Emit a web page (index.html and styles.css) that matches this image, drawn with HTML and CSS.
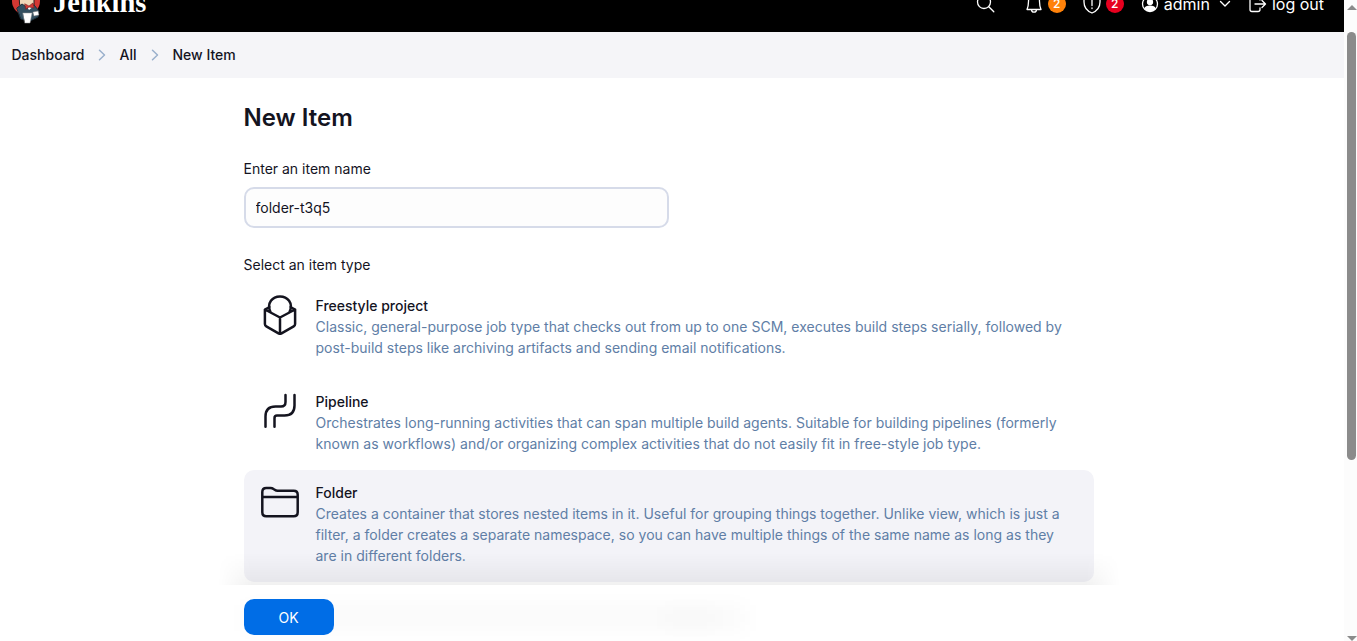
FILE: index.html
```html
<!DOCTYPE html>
<html lang="en">
<head>
<meta charset="utf-8">
<title>New Item - Jenkins</title>
<link rel="stylesheet" href="styles.css">
</head>
<body>
<div class="window">
<div class="page">
  <header class="header">
    <div class="brand">
      <svg class="mascot" viewBox="0 0 32 40">
        <circle cx="15" cy="17" r="14" fill="#d33833"/>
        <path d="M8 7h15v14l-7 4-7-4z" fill="#f0d6b7" stroke="#231f20"/>
        <path d="M6 24l5-4 6 4 6-3 5 6-1 6-8 4-9-2z" fill="#335061" stroke="#1d2f3a"/>
        <path d="M15 21l3 5 5-4" fill="#fff"/>
        <path d="M14 20l4 2 4-3 1 5-5-1-3 2z" fill="#d33833" stroke="#81211f" stroke-width=".7"/>
        <path d="M12 29h9l-2 10h-5z" fill="#fff" stroke="#999" stroke-width=".5"/>
        <path d="M22 28l5-1 1 4-5 1z" fill="#fff" stroke="#777" stroke-width=".5"/>
      </svg>
      <span class="brand-name">Jenkins</span>
    </div>
    <nav class="tools">
      <svg class="icon search" viewBox="0 0 20 20"><circle cx="8" cy="8" r="6.5"/><path d="M12.8 12.8l5 5"/></svg>
      <span class="tool alerts"><svg class="icon" viewBox="0 0 20 20"><path d="M10 1C6 1 4.500 4 4.500 7.500 4.500 11 4 13 3 15.500h14C16 13 15.500 11 15.500 7.500 15.500 4 14 1 10 1zM7.500 15.500c0 3.600 5 3.600 5 0"/></svg><b class="badge orange">2</b></span>
      <span class="tool security"><svg class="icon" viewBox="0 0 20 20"><path d="M10 1L2 4v4c0 6 3 9 8 11C15 17 18 14 18 8V4zM10 5v6.500M10 14v.5"/></svg><b class="badge red">2</b></span>
      <span class="tool user"><svg class="icon" viewBox="0 0 20 20"><circle cx="10" cy="10" r="7.500"/><circle cx="10" cy="8" r="2.500" fill="#fff"/><path d="M5 14.500c1-3 9-3 10 0-2 3-8 3-10 0z" fill="#fff"/></svg><span>admin</span><svg class="chevron" viewBox="0 0 12 12"><path d="M1.500 3.500L6 8l4.500-4.500"/></svg></span>
      <span class="tool logout"><svg class="icon" viewBox="0 0 20 20"><path d="M12 6V4.500Q12 2.500 10 2.500H4Q2 2.500 2 4.500v11q0 2 2 2h6q2 0 2-2V14M7 10h10.500M14 6.500l3.500 3.500-3.500 3.500"/></svg><span>log out</span></span>
    </nav>
  </header>
  <div class="breadcrumbs">
    <span>Dashboard</span>
    <svg class="sep" viewBox="0 0 8 12"><path d="M1.500 1.200L6.500 6l-5 4.800"/></svg>
    <span>All</span>
    <svg class="sep wide" viewBox="0 0 8 12"><path d="M1.500 1.200L6.500 6l-5 4.800"/></svg>
    <span>New Item</span>
  </div>
  <main class="main">
    <h1 class="title">New Item</h1>
    <label class="label" for="name">Enter an item name</label>
    <input class="name" id="name" type="text" value="folder-t3q5">
    <div class="label">Select an item type</div>
    <ul class="types">
      <li class="type">
        <svg class="type-icon" viewBox="0 0 40 40"><path d="M20 22.500L4.900 14.500v14.500q0 1.600 1.400 2.400l12.200 7q1.500.9 3 0l12.200-7q1.400-.8 1.400-2.400V14.500zV38.500M9.600 12L4.900 14.500M30.400 12l4.700 2.500M10.300 16.500C6.500 8 12.500 1.500 20 1.500S33.500 8 29.700 16.500"/></svg>
        <div class="body"><div class="type-name">Freestyle project</div><div class="desc">Classic, general-purpose job type that checks out from up to one SCM, executes build steps serially, followed by post-build steps like archiving artifacts and sending email notifications.</div></div>
      </li>
      <li class="type">
        <svg class="type-icon" viewBox="0 0 40 40"><path d="M5.500 35.700V25.500q0-10 10-10H21q4.500 0 4.500-4.500V4M14.500 35.700V27q0-2.500 2.500-2.500h7.500q10 0 10-10V4"/></svg>
        <div class="body"><div class="type-name">Pipeline</div><div class="desc">Orchestrates long-running activities that can span multiple build agents. Suitable for building pipelines (formerly known as workflows) and/or organizing complex activities that do not easily fit in free-style job type.</div></div>
      </li>
      <li class="type active">
        <svg class="type-icon" viewBox="0 0 40 40"><path d="M2.300 10Q2.300 6 6.300 6h4.200q1.700 0 3 1l1.200.8q1.300 1 3 1h16q4 0 4 4v17.400q0 4-4 4H6.300q-4 0-4-4zM2.300 15h35.400"/></svg>
        <div class="body"><div class="type-name">Folder</div><div class="desc">Creates a container that stores nested items in it. Useful for grouping things together. Unlike view, which is just a filter, a folder creates a separate namespace, so you can have multiple things of the same name as long as they are in different folders.</div></div>
      </li>
    </ul>
  </main>
  <footer class="footer">
    <div class="shade"></div>
    <div class="blur"></div>
    <div class="blur dense"></div>
    <button class="ok">OK</button>
  </footer>
</div>
<div class="scrollbar"><i class="up"></i><i class="thumb"></i><i class="down"></i></div>
</div>
</body>
</html>
```
FILE: styles.css
```css
* { box-sizing: border-box; }
body { margin: 0; overflow: hidden; font: 14px/21px Inter, sans-serif; color: #14141f; background: #fff; }
svg { flex: none; fill: none; stroke-linecap: round; stroke-linejoin: round; }
.window { display: flex; height: 641px; overflow: hidden; }
.page { display: flex; flex-direction: column; width: 1344px; height: 641px; }
.header { display: flex; flex: none; justify-content: space-between; height: 56px; margin-top: -24px; padding: 0 20px 0 11px; background: #000; color: #fff; }
.brand { display: flex; align-items: center; gap: 10px; }
.mascot { width: 32px; height: 40px; }
.brand-name { margin-bottom: 3px; font: bold 28.5px/32px "Liberation Serif", serif; }
.tools { display: flex; align-items: center; font-size: 16px; }
.tool { display: flex; align-items: center; }
.icon { width: 20px; height: 20px; stroke: #fff; stroke-width: 1.3; }
.search { margin-right: 28px; }
.alerts { margin-right: 16px; }
.security { margin-right: 16px; }
.user { margin-right: 17px; }
.user .icon, .logout .icon { margin-right: 4px; }
.chevron { width: 12px; height: 12px; margin-left: 9px; stroke: #fff; stroke-width: 1.4; }
.badge { width: 18px; height: 18px; margin-left: 4px; border-radius: 50%; font-size: 12px; line-height: 18px; font-weight: 500; text-align: center; }
.orange { background: #ff820a; }
.red { background: #e6001f; }
.breadcrumbs { display: flex; flex: none; align-items: center; height: 46px; padding: 0 0 1px 11.5px; background: #f5f5f8; font-weight: 500; }
.sep { width: 8px; height: 12px; margin: 0 13.5px; stroke: #9ab0cc; stroke-width: 1.5; }
.sep.wide { margin-left: 14.5px; }
.main { width: 850px; height: 507px; margin-left: 244px; }
.title { margin: 0 0 0 -.5px; padding-top: 24px; font-size: 24px; line-height: 32px; font-weight: 600; }
.label { display: block; margin: 24px 0 0 -.5px; }
.name { display: block; width: 425px; height: 41px; margin: 8px 0 26px; padding: 0 9.5px; border: 2px solid #d6dbe9; border-radius: 10px; background: #fdfdfd; color: #14141f; font: 14px Inter, sans-serif; outline: none; }
.types { margin: 9px 0 0; padding: 0; list-style: none; }
.type { display: flex; gap: 15.5px; height: 96px; padding: 11px 16px; border-radius: 10px; }
.type.active { height: 112px; margin-top: -6px; padding-top: 12px; background: #f3f3f8; }
.type-icon { width: 40px; height: 40px; stroke: #14141f; stroke-width: 2.5; }
.body { width: 762px; }
.type-name { font-weight: 500; }
.desc { color: #607ea6; letter-spacing: .01px; }
.footer { position: relative; display: flex; align-items: center; height: 56px; padding: 8px 0 0 244px; background: #fff; }
.shade { position: absolute; left: 218px; bottom: 56px; width: 902px; height: 32px; background: linear-gradient(transparent, rgba(0,0,0,.055)); -webkit-mask-image: linear-gradient(90deg, transparent, #000 34px, #000 868px, transparent); mask-image: linear-gradient(90deg, transparent, #000 34px, #000 868px, transparent); }
.blur { position: absolute; left: 245px; top: 20px; width: 500px; height: 26px; background: rgba(0,0,0,.02); filter: blur(9px); }
.blur.dense { left: 665px; top: 22px; width: 50px; height: 22px; background: rgba(0,0,0,.01); }
.ok { position: relative; width: 90px; height: 36px; padding: 0 7px 0 6px; border: 0; border-radius: 10px; background: #006de6; color: #fff; font: 14px Inter, sans-serif; }
.scrollbar { display: flex; flex-direction: column; align-items: center; width: 13px; height: 641px; padding: 5px 0 0 2px; background: #fcfcfc; }
.up, .down { border: 5px solid transparent; }
.up { border-top: 0; border-bottom-color: #8b8b8b; }
.thumb { width: 9px; height: 428px; margin-top: 22px; border-radius: 5px; background: #8b8b8b; }
.down { margin-top: 176px; border-bottom: 0; border-top-color: #8b8b8b; }
```
